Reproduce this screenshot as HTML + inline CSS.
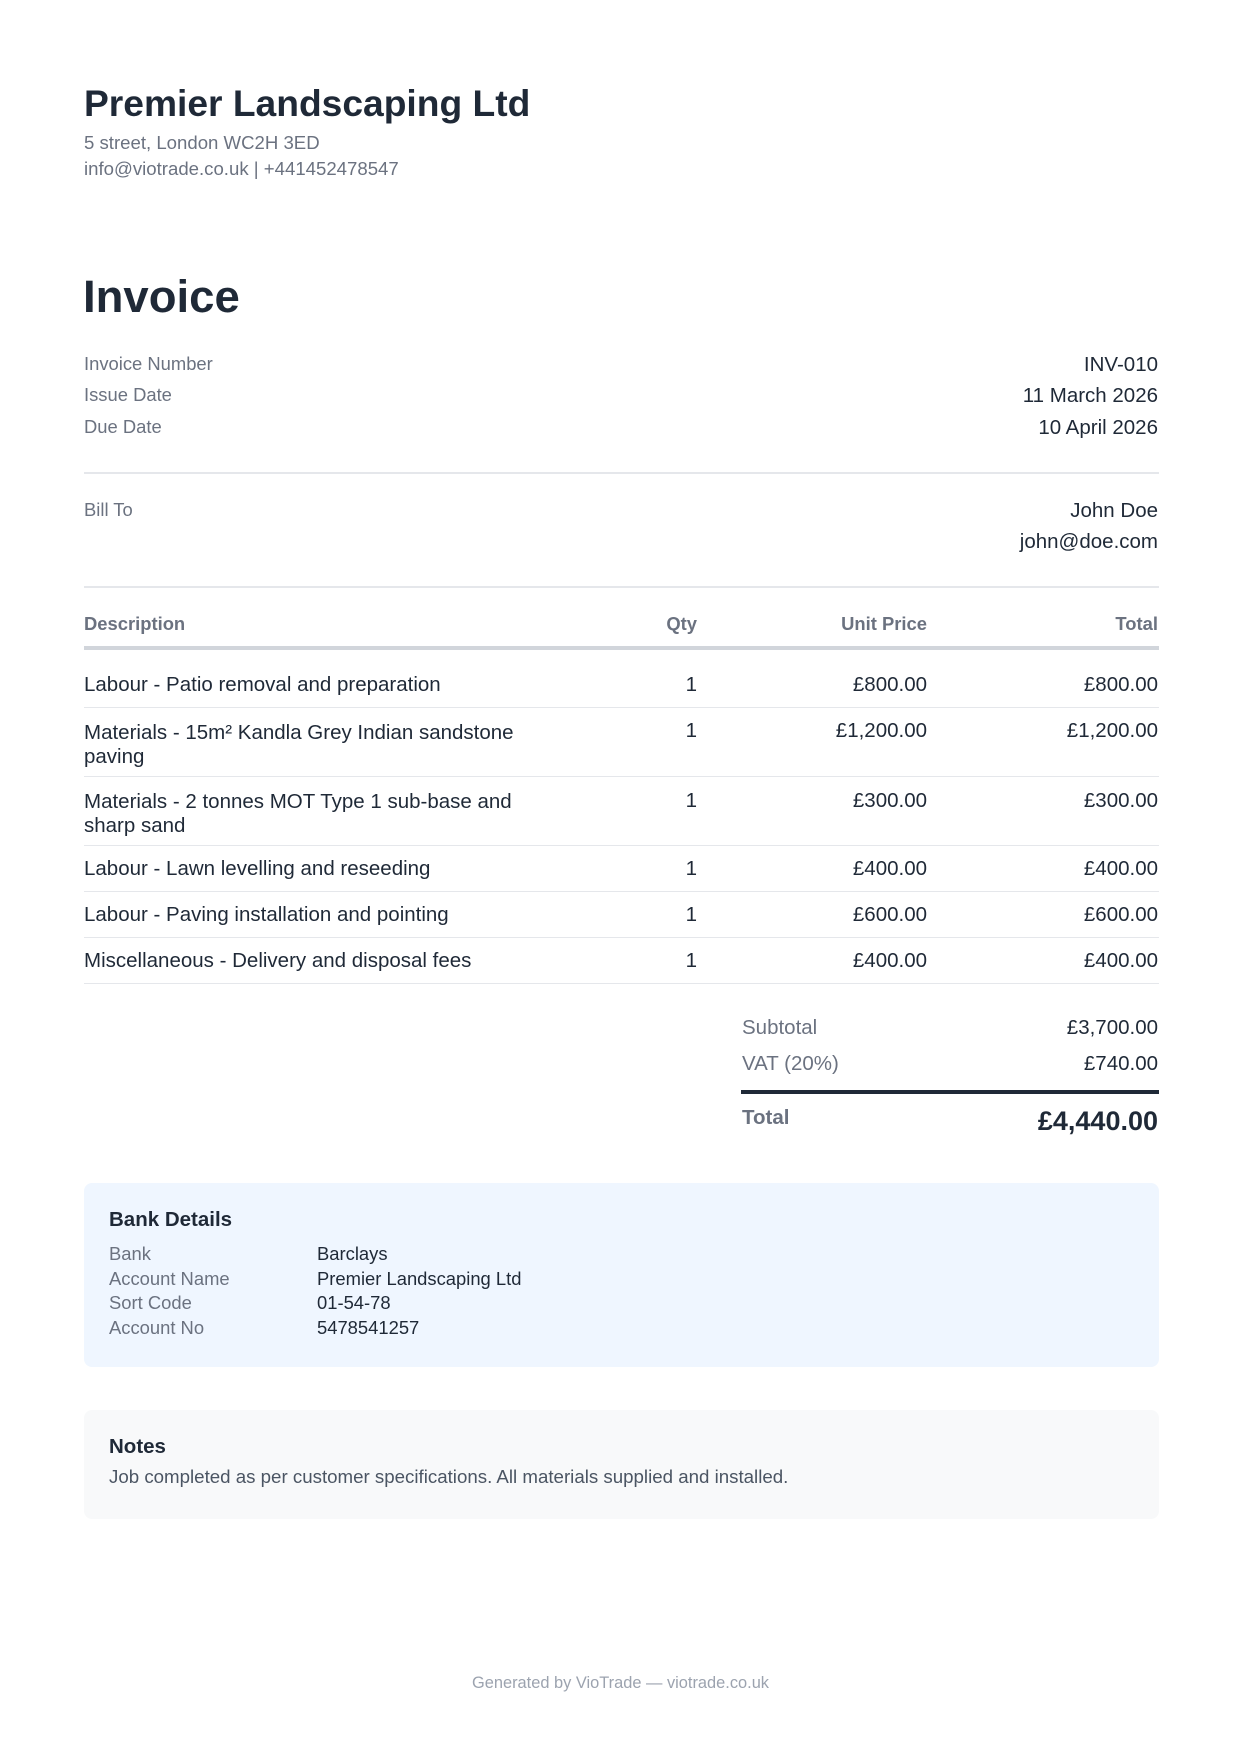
<!DOCTYPE html>
<html><head><meta charset="utf-8"><style>
*{margin:0;padding:0;box-sizing:border-box}
body{width:1241px;height:1755px;background:#fff;font-family:"Liberation Sans",Arial,sans-serif;color:#1f2937;position:relative;overflow:hidden}
.a{position:absolute;white-space:nowrap;line-height:1}
.g{color:#6b7280}
.r{text-align:right}
.hr{position:absolute;left:84px;width:1075px;height:2px;background:#e5e7eb}
.t{font-size:20.5px}
</style></head><body>
<div class="a" style="left:84px;top:85px;font-size:37.2px;font-weight:bold;color:#1f2937">Premier Landscaping Ltd</div>
<div class="a g" style="left:84px;top:134px;font-size:18.6px">5 street, London WC2H 3ED</div>
<div class="a g" style="left:84px;top:160px;font-size:18.6px">info@viotrade.co.uk | +441452478547</div>
<div class="a" style="left:83px;top:274px;font-size:45.5px;font-weight:bold">Invoice</div>

<div class="a g" style="left:84px;top:355px;font-size:18.4px">Invoice Number</div>
<div class="a g" style="left:84px;top:386px;font-size:18.4px">Issue Date</div>
<div class="a g" style="left:84px;top:418px;font-size:18.4px">Due Date</div>
<div class="a r t" style="right:83px;top:355px">INV-010</div>
<div class="a r t" style="right:83px;top:386px">11 March 2026</div>
<div class="a r t" style="right:83px;top:418px">10 April 2026</div>
<div class="hr" style="top:472px"></div>

<div class="a g" style="left:84px;top:501px;font-size:18.4px">Bill To</div>
<div class="a r t" style="right:83px;top:501px">John Doe</div>
<div class="a r t" style="right:83px;top:532px">john@doe.com</div>
<div class="hr" style="top:586px"></div>

<div class="a g" style="left:84px;top:615px;font-size:18.4px;font-weight:bold">Description</div>
<div class="a g r" style="right:544px;top:615px;font-size:18.4px;font-weight:bold">Qty</div>
<div class="a g r" style="right:314px;top:615px;font-size:18.4px;font-weight:bold">Unit Price</div>
<div class="a g r" style="right:83px;top:615px;font-size:18.4px;font-weight:bold">Total</div>
<div class="hr" style="top:646px;height:4px;background:#d1d5db"></div>

<div class="a t" style="left:84px;top:675px">Labour - Patio removal and preparation</div>
<div class="a r t" style="right:544px;top:675px">1</div>
<div class="a r t" style="right:314px;top:675px">£800.00</div>
<div class="a r t" style="right:83px;top:675px">£800.00</div>
<div class="hr" style="top:707px;height:1px"></div>

<div class="a t" style="left:84px;top:721px;line-height:24px">Materials - 15m² Kandla Grey Indian sandstone<br>paving</div>
<div class="a r t" style="right:544px;top:721px">1</div>
<div class="a r t" style="right:314px;top:721px">£1,200.00</div>
<div class="a r t" style="right:83px;top:721px">£1,200.00</div>
<div class="hr" style="top:776px;height:1px"></div>

<div class="a t" style="left:84px;top:790px;line-height:24px">Materials - 2 tonnes MOT Type 1 sub-base and<br>sharp sand</div>
<div class="a r t" style="right:544px;top:791px">1</div>
<div class="a r t" style="right:314px;top:791px">£300.00</div>
<div class="a r t" style="right:83px;top:791px">£300.00</div>
<div class="hr" style="top:845px;height:1px"></div>

<div class="a t" style="left:84px;top:859px">Labour - Lawn levelling and reseeding</div>
<div class="a r t" style="right:544px;top:859px">1</div>
<div class="a r t" style="right:314px;top:859px">£400.00</div>
<div class="a r t" style="right:83px;top:859px">£400.00</div>
<div class="hr" style="top:891px;height:1px"></div>

<div class="a t" style="left:84px;top:905px">Labour - Paving installation and pointing</div>
<div class="a r t" style="right:544px;top:905px">1</div>
<div class="a r t" style="right:314px;top:905px">£600.00</div>
<div class="a r t" style="right:83px;top:905px">£600.00</div>
<div class="hr" style="top:937px;height:1px"></div>

<div class="a t" style="left:84px;top:951px">Miscellaneous - Delivery and disposal fees</div>
<div class="a r t" style="right:544px;top:951px">1</div>
<div class="a r t" style="right:314px;top:951px">£400.00</div>
<div class="a r t" style="right:83px;top:951px">£400.00</div>
<div class="hr" style="top:983px;height:1px"></div>

<div class="a g t" style="left:742px;top:1018px">Subtotal</div>
<div class="a r t" style="right:83px;top:1018px">£3,700.00</div>
<div class="a g t" style="left:742px;top:1054px">VAT (20%)</div>
<div class="a r t" style="right:83px;top:1054px">£740.00</div>
<div class="a" style="left:741px;top:1090px;width:418px;height:4px;background:#1f2937"></div>
<div class="a g t" style="left:742px;top:1108px;font-weight:bold">Total</div>
<div class="a r" style="right:83px;top:1108px;font-size:27px;font-weight:bold">£4,440.00</div>

<div class="a" style="left:84px;top:1183px;width:1075px;height:184px;background:#eff6ff;border-radius:8px"></div>
<div class="a" style="left:109px;top:1210px;font-size:20.5px;font-weight:bold">Bank Details</div>
<div class="a g" style="left:109px;top:1245px;font-size:18.4px">Bank</div>
<div class="a g" style="left:109px;top:1270px;font-size:18.4px">Account Name</div>
<div class="a g" style="left:109px;top:1294px;font-size:18.4px">Sort Code</div>
<div class="a g" style="left:109px;top:1319px;font-size:18.4px">Account No</div>
<div class="a" style="left:317px;top:1245px;font-size:18.4px">Barclays</div>
<div class="a" style="left:317px;top:1270px;font-size:18.4px">Premier Landscaping Ltd</div>
<div class="a" style="left:317px;top:1294px;font-size:18.4px">01-54-78</div>
<div class="a" style="left:317px;top:1319px;font-size:18.4px">5478541257</div>

<div class="a" style="left:84px;top:1410px;width:1075px;height:109px;background:#f8f9fa;border-radius:8px"></div>
<div class="a" style="left:109px;top:1437px;font-size:20.5px;font-weight:bold">Notes</div>
<div class="a" style="left:109px;top:1468px;font-size:18.7px;color:#4b5563">Job completed as per customer specifications. All materials supplied and installed.</div>

<div class="a" style="left:0;width:1241px;text-align:center;top:1675px;font-size:16.4px;color:#9ca3af">Generated by VioTrade — viotrade.co.uk</div>
</body></html>
